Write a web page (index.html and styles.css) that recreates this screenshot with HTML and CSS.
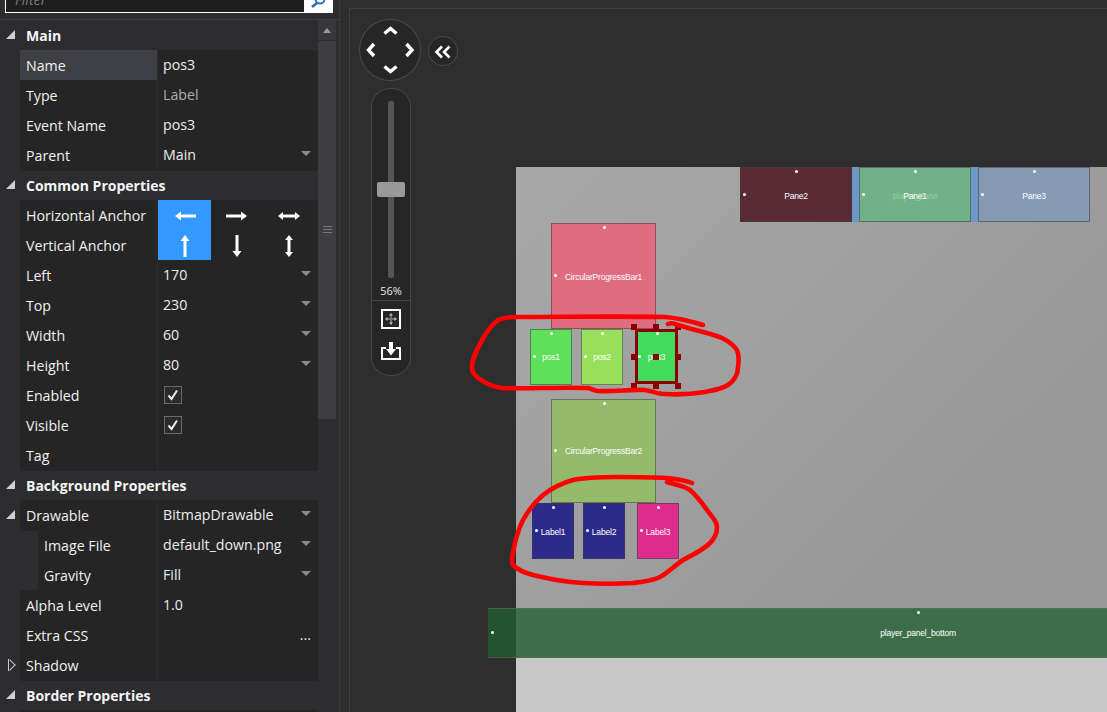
FILE: index.html
```html
<!DOCTYPE html>
<html lang="en">
<head>
<meta charset="utf-8">
<title>Designer</title>
<link rel="stylesheet" href="styles.css">
</head>
<body>
<div class="app">
  <aside class="panel">
    <div class="filter">
      <span class="filter-text">Filter</span>
      <span class="filter-btn"><svg width="20" height="20" viewBox="0 0 20 20"><circle cx="11" cy="6" r="4.500" fill="none" stroke="#2a6fc0" stroke-width="2"/><path d="M8 10 3 14" stroke="#2a6fc0" stroke-width="2.600"/></svg></span>
    </div>
    <div class="props">
      <div class="list">
        <div class="head"><i class="tri"></i>Main</div>
        <div class="row"><div class="k sel">Name</div><div class="v">pos3</div></div>
        <div class="row"><div class="k">Type</div><div class="v dim">Label</div></div>
        <div class="row"><div class="k">Event Name</div><div class="v">pos3</div></div>
        <div class="row"><div class="k">Parent</div><div class="v drop">Main</div></div>
        <div class="head"><i class="tri"></i>Common Properties</div>
        <div class="row"><div class="k">Horizontal Anchor</div><div class="v anchors">
          <span class="a on"><svg width="24" height="12" viewBox="0 0 24 12"><path d="M2 6 8 1.500v3h15v3H8v3z" fill="#fff"/></svg></span>
          <span class="a"><svg width="24" height="12" viewBox="0 0 24 12"><path d="M22 6 16 1.500v3H1v3h15v3z" fill="#fff"/></svg></span>
          <span class="a"><svg width="24" height="12" viewBox="0 0 24 12"><path d="M1 6l5-4v2.500h12V2l5 4-5 4V7.500H6V10z" fill="#fff"/></svg></span>
        </div></div>
        <div class="row"><div class="k">Vertical Anchor</div><div class="v anchors">
          <span class="a on"><svg width="12" height="24" viewBox="0 0 12 24"><path d="M6 1 1.500 7h3v16h3V7h3z" fill="#fff"/></svg></span>
          <span class="a"><svg width="12" height="24" viewBox="0 0 12 24"><path d="M6 23 1.500 17h3V1h3v16h3z" fill="#fff"/></svg></span>
          <span class="a"><svg width="12" height="24" viewBox="0 0 12 24"><path d="M6 1 2 6h2.500v12H2l4 5 4-5H7.500V6H10z" fill="#fff"/></svg></span>
        </div></div>
        <div class="row"><div class="k">Left</div><div class="v drop">170</div></div>
        <div class="row"><div class="k">Top</div><div class="v drop">230</div></div>
        <div class="row"><div class="k">Width</div><div class="v drop">60</div></div>
        <div class="row"><div class="k">Height</div><div class="v drop">80</div></div>
        <div class="row"><div class="k">Enabled</div><div class="v"><span class="check"><svg width="16" height="16" viewBox="0 0 16 16"><path d="M3.500 8.500 6.500 12 12 3.500" fill="none" stroke="#eee" stroke-width="2"/></svg></span></div></div>
        <div class="row"><div class="k">Visible</div><div class="v"><span class="check"><svg width="16" height="16" viewBox="0 0 16 16"><path d="M3.500 8.500 6.500 12 12 3.500" fill="none" stroke="#eee" stroke-width="2"/></svg></span></div></div>
        <div class="row"><div class="k">Tag</div><div class="v"></div></div>
        <div class="head"><i class="tri"></i>Background Properties</div>
        <div class="row"><i class="tri"></i><div class="k">Drawable</div><div class="v drop">BitmapDrawable</div></div>
        <div class="row sub"><div class="k">Image File</div><div class="v drop">default_down.png</div></div>
        <div class="row sub"><div class="k">Gravity</div><div class="v drop">Fill</div></div>
        <div class="row"><div class="k">Alpha Level</div><div class="v">1.0</div></div>
        <div class="row"><div class="k">Extra CSS</div><div class="v more">...</div></div>
        <div class="row"><i class="tri-open"></i><div class="k">Shadow</div><div class="v"></div></div>
        <div class="head"><i class="tri"></i>Border Properties</div>
        <div class="row"><div class="k"></div><div class="v"></div></div>
      </div>
      <div class="scroll">
        <div class="scroll-up"><i></i></div>
        <div class="scroll-thumb"><i></i><i></i><i></i></div>
      </div>
    </div>
  </aside>

  <main class="work">
    <div class="frame"></div>

    <div class="nav">
      <svg width="62" height="62" viewBox="0 0 62 62"><g fill="none" stroke="#fff" stroke-width="3.400"><path d="M25.500 14.500 31.500 9.500l6 5"/><path d="M25.500 47.500 31.500 52.500l6-5"/><path d="M15 25 9.500 31l5.500 6"/><path d="M47.500 25 53 31l-5.500 6"/></g></svg>
    </div>
    <div class="collapse">
      <svg width="30" height="30" viewBox="0 0 30 30"><g fill="none" stroke="#fff" stroke-width="2.600"><path d="M14 10.500 8.500 16l5.500 5.500"/><path d="M21.500 10.500 16 16l5.500 5.500"/></g></svg>
    </div>

    <div class="zoom">
      <div class="track"></div>
      <div class="thumb"></div>
      <div class="pct">56%</div>
      <div class="tools">
        <svg width="20" height="20" viewBox="0 0 20 20"><rect x="1" y="1" width="18" height="18" fill="none" stroke="#fff" stroke-width="2"/><path d="M10 4 8 6.500h1.500v7H8L10 16l2-2.500h-1.500v-7H12zM4 10l2.500-2v1.500h7V8L16 10l-2.500 2v-1.500h-7V12z" fill="#bbb"/></svg>
        <svg width="20" height="20" viewBox="0 0 20 20"><path d="M5 6H1v11h18V6h-4" fill="none" stroke="#fff" stroke-width="2"/><path d="M8 0h4v7h3l-5 6.500L5 7h3z" fill="#fff"/></svg>
      </div>
    </div>

    <div class="stage">
      <div class="stage-fill"></div>
      <div class="stage-foot"></div>
    </div>

    <div class="w back-pane"><span class="dim-label">player_pane</span></div>
    <div class="w pane2"><span>Pane2</span></div>
    <div class="w pane1"><span>Pane1</span></div>
    <div class="w pane3"><span>Pane3</span></div>
    <div class="w cpb1"><span>CircularProgressBar1</span></div>
    <div class="w pos1"><span>pos1</span></div>
    <div class="w pos2"><span>pos2</span></div>
    <div class="w pos3"><span>pos3</span>
      <i class="h tl"></i><i class="h tc"></i><i class="h tr"></i><i class="h ml"></i><i class="h mc"></i><i class="h mr"></i><i class="h bl"></i><i class="h bc"></i><i class="h br"></i>
    </div>
    <div class="w cpb2"><span>CircularProgressBar2</span></div>
    <div class="w label1"><span>Label1</span></div>
    <div class="w label2"><span>Label2</span></div>
    <div class="w label3"><span>Label3</span></div>
    <div class="w bottom"><span>player_panel_bottom</span></div>

    <svg class="ink" width="767" height="712" viewBox="340 0 767 712">
      <path d="M703 325C690 321 680 318 665 317C620 316 560 317 515 317C508 317 503 318 498 320C490 326 486 333 482 340C477 350 472 358 472 367C472 372 474 375 478 378C485 383 493 387 502 388C530 389 560 387 588 388C592 389 594 391 598 391C615 392 630 389 645 390C652 391 658 394 665 394C680 395 693 394 705 392C715 390 722 389 728 385C735 380 738 374 738 367C739 360 739 355 737 350C733 344 728 341 722 338C708 332 693 330 678 325C674 323 670 323 668 324"/>
      <path d="M667 482C672 484 682 485 690 490C697 496 702 503 707 510C712 517 717 521 717 527C717 534 714 539 710 543C702 551 692 555 683 560C675 565 668 573 660 577C652 581 642 582 633 583C616 584 600 584 583 583C566 582 549 579 533 575C525 573 518 570 513 565C511 561 512 557 513 553C515 541 518 530 523 520C528 511 535 502 543 495C552 488 562 483 573 480C587 477 602 477 617 477C634 477 650 477 667 478C676 479 685 480 692 483"/>
    </svg>
  </main>
</div>
</body>
</html>
```

FILE: styles.css
```css
* { box-sizing: border-box; }
html, body { margin: 0; height: 100%; overflow: hidden; }
body { background: #2d2d30; color: #f1f1f1; font-family: "Open Sans", "Noto Sans", sans-serif; font-size: 14.2px; }
.app { display: flex; width: 1107px; height: 712px; }

/* property panel */
.panel { width: 339px; flex: none; display: flex; flex-direction: column; overflow: hidden; background: #2d2d30; }
.filter { flex: none; height: 20px; border-bottom: 1px solid #3f3f46; padding: 0 6px 6px 5px; display: flex; align-items: flex-end; }
.filter-text, .filter-btn { height: 24px; }
.filter-text { flex: 1; background: #1e1e1e; border: 1px solid #fff; border-right: 0; color: #7a7a7a; font-style: italic; padding: 0 0 0 9px; line-height: 20px; overflow: hidden; }
.filter-btn { width: 29px; background: #fff; display: flex; align-items: flex-start; justify-content: center; }
.filter-btn svg { margin-top: 4px; }
.props { flex: 1; display: flex; min-height: 0; }
.list { width: 318px; flex: none; }
.head { height: 30px; display: flex; align-items: center; padding-left: 26px; font-weight: 700; font-size: 14px; color: #f4f4f4; position: relative; }
.tri { position: absolute; left: 6px; top: 10px; width: 0; height: 0; border-style: solid; border-width: 0 0 9px 9px; border-color: transparent transparent #cfcfcf transparent; }
.tri-open { position: absolute; left: 8px; top: 9px; width: 7px; height: 12px; border-left: 1px solid #ccc; }
.tri-open::after { content: ""; position: absolute; left: 0; top: 1px; width: 7px; height: 7px; border-top: 1px solid #ccc; border-right: 1px solid #ccc; transform: translate(-3px, 1px) rotate(45deg); }
.row { height: 30px; display: grid; grid-template-columns: 137px 160px; column-gap: 1px; padding-left: 20px; border-bottom: 1px solid #2d2d30; position: relative; }
.k { background: #252526; padding-left: 6px; line-height: 31px; color: #f1f1f1; white-space: nowrap; }
.k.sel { background: #3f3f46; }
.v { background: #252526; padding-left: 5px; line-height: 30px; color: #ececec; position: relative; white-space: nowrap; }
.v.dim { color: #adadad; }
.drop::after { content: ""; position: absolute; right: 7px; top: 11px; border-style: solid; border-width: 5px 5px 0; border-color: #8a8a8a transparent transparent; }
.more { text-align: right; padding-right: 7px; }
.row.sub .k { margin-left: 18px; padding-left: 6px; }
.anchors { display: grid; grid-template-columns: 53px 52px 52px; padding: 0; }
.a { display: flex; align-items: center; justify-content: center; }
.a.on { background: #3399ff; }
.check { position: absolute; left: 6px; top: 6px; width: 18px; height: 18px; border: 1px solid #6a6a6a; background: #2b2b2b; display: flex; align-items: center; justify-content: center; }
.scroll { width: 18px; flex: none; display: flex; flex-direction: column; gap: 1px; }
.scroll-up { height: 20px; background: #38383c; display: flex; align-items: center; justify-content: center; }
.scroll-up i { border-style: solid; border-width: 0 4.500px 5px; border-color: transparent transparent #9a9a9a; }
.scroll-thumb { height: 378px; background: #3e3e42; display: flex; flex-direction: column; align-items: center; gap: 2px; padding-top: 185px; }
.scroll-thumb i { width: 9px; height: 1px; background: #77777c; }

/* work area */
.work { flex: 1; position: relative; overflow: hidden; background: #2e2e2e; border-left: 1px solid #3a3a3d; }
.frame { position: absolute; left: 9px; top: 8px; right: 0; bottom: 0; border-left: 1px solid #3f3f42; border-top: 1px solid #3f3f42; }
.nav { position: absolute; left: 19px; top: 19px; width: 62px; height: 62px; border-radius: 50%; background: #262626; box-shadow: inset 0 0 0 1px #4a4a50; }
.nav svg, .collapse svg { display: block; }
.collapse { position: absolute; left: 88px; top: 36px; width: 30px; height: 30px; border-radius: 50%; background: #262626; box-shadow: inset 0 0 0 1px #4a4a50; }
.zoom { position: absolute; left: 31px; top: 88px; width: 40px; height: 288px; background: #262626; border: 1px solid #45454a; border-radius: 20px / 18px; }
.track { position: absolute; left: 16px; top: 12px; width: 6px; height: 177px; background: #555; border-radius: 2px; }
.thumb { position: absolute; left: 5px; top: 93px; width: 28px; height: 15px; background: #999; border-radius: 2px; }
.pct { position: absolute; left: 0; right: 0; top: 194px; text-align: center; font-size: 11px; line-height: 16px; color: #e8e8e8; }
.tools { position: absolute; left: 0; right: 0; top: 211px; border-top: 1px solid #45454a; display: flex; flex-direction: column; align-items: center; gap: 13px; padding-top: 8px; }
.tools svg { display: block; overflow: visible; }

.stage { position: absolute; left: 176px; top: 167px; right: 0; bottom: 0; display: flex; flex-direction: column; }
.stage-fill { height: 491px; background: linear-gradient(135deg, #a8a8a8 0%, #999 70%); }
.stage-foot { flex: 1; background: #c8c8c8; }

/* widgets on the designer canvas */
.w { position: absolute; display: flex; align-items: center; justify-content: center; font-family: "Liberation Sans", sans-serif; font-size: 8.500px; letter-spacing: -.2px; color: #fff; border: 1px solid rgba(60, 60, 60, .55); }
.w::before, .w::after { content: ""; position: absolute; width: 3px; height: 3px; background: #fff; border-radius: 50%; }
.w::before { left: 50%; top: 2px; margin-left: -1px; }
.w::after { left: 2px; top: 50%; margin-top: -2px; }
.back-pane { left: 400px; top: 167px; width: 350px; height: 55px; background: #6b98c8; border: 0; padding-top: 2px; }
.back-pane::before, .back-pane::after { display: none; }
.pane2 { left: 400px; top: 167px; width: 112px; height: 55px; background: #5a2a35; padding-top: 2px; }
.pane1 { left: 519px; top: 167px; width: 112px; height: 55px; background: rgba(116, 184, 118, .757); padding-top: 2px; }
.pane3 { left: 638px; top: 167px; width: 112px; height: 55px; background: #869ab4; padding-top: 2px; }
.cpb1 { left: 211px; top: 223px; width: 105px; height: 106px; background: #e06c80; padding-top: 1px; }
.cpb2 { left: 211px; top: 399px; width: 105px; height: 104px; background: #94ba6c; }
.pos1 { left: 190px; top: 329px; width: 42px; height: 56px; background: #5ee05a; }
.pos2 { left: 241px; top: 329px; width: 42px; height: 56px; background: #98e05c; }
.pos3 { left: 295px; top: 329px; width: 43px; height: 55px; background: #42dc5c; border: 3px solid #8b0000; }
.pos3::before { top: 0; }
.pos3::after { left: 0; }
.label1 { left: 192px; top: 503px; width: 42px; height: 56px; background: #2c2a8a; padding-top: 1px; }
.label2 { left: 243px; top: 503px; width: 42px; height: 56px; background: #2c2a8a; padding-top: 1px; }
.label3 { left: 297px; top: 503px; width: 42px; height: 56px; background: #dc2c8c; padding-top: 1px; }
.bottom { left: 148px; top: 608px; width: 860px; height: 50px; background: rgba(32, 97, 45, .757); border-color: rgba(90, 110, 90, .6); border-left: 0; border-right: 0; }
.bottom::after { left: 3px; }
.h { position: absolute; width: 6px; height: 6px; background: #8b0000; }
.tl { left: -7px; top: -8px; }
.tc { left: 15px; top: -8px; }
.tr { right: -6px; top: -8px; }
.ml { left: -7px; top: 22px; }
.mc { left: 15px; top: 22px; }
.mr { right: -6px; top: 22px; }
.bl { left: -7px; bottom: -8px; }
.bc { left: 15px; bottom: -8px; }
.br { right: -6px; bottom: -8px; }
.ink { position: absolute; left: 0; top: 0; pointer-events: none; }
.ink path { fill: none; stroke: #f00; stroke-width: 4.600; stroke-linecap: round; stroke-linejoin: round; }
```
